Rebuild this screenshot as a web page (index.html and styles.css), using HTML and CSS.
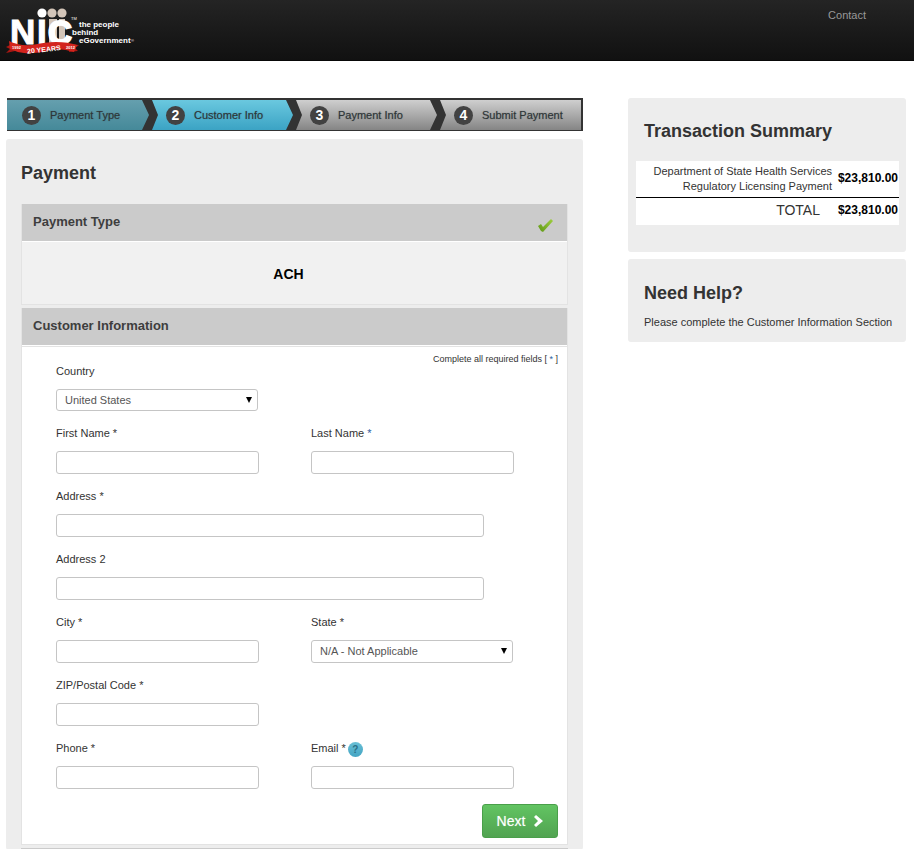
FILE: index.html
```html
<!DOCTYPE html>
<html lang="en">
<head>
<meta charset="utf-8">
<title>Payment</title>
<link rel="stylesheet" href="styles.css">
</head>
<body>
<header class="topbar">
  <svg class="logo" width="136" height="54" viewBox="0 0 136 54" role="img" aria-label="NIC">
    <g fill="#d3c5b8">
      <circle cx="52" cy="13" r="4.600"/><circle cx="62" cy="13" r="4.600"/>
      <rect x="49" y="19" width="8" height="25"/><rect x="59" y="19" width="6" height="25"/>
    </g>
    <circle cx="42" cy="13" r="4.600" fill="#fff"/>
    <g class="logo-name"><text x="10" y="44">N</text><text x="37" y="44">I</text><text class="logo-c" x="48" y="44">C</text></g>
    <path d="M6 47 L14 43 L15 51 L6 53 L10 49Z M79 45 L70 44 L69 52 L78 51 L75 48Z" fill="#a91712"/>
    <path d="M9 41 Q18 46 32 45 Q46 42 56 42 Q68 42 77 45 L74 52 Q62 48 50 50 Q36 54 24 53 Q16 52 10 49Z" fill="#d3241d"/>
    <g class="logo-ribbon"><text x="27" y="52" transform="rotate(-6 43 50)">20 YEARS</text></g>
    <g class="logo-year"><text x="12" y="49">1992</text><text x="66" y="49">2012</text></g>
    <g class="logo-tag"><text x="79" y="27">the people</text><text x="72" y="35">behind</text><text x="79" y="43">eGovernment</text></g>
    <g class="logo-mark"><text x="71" y="20">TM</text><text x="131" y="42">®</text></g>
  </svg>
  <a class="contact" href="#">Contact</a>
</header>

<div class="page">
  <main>
    <ol class="steps">
      <li class="step done"><span class="num">1</span>Payment Type</li>
      <li class="step current"><span class="num">2</span>Customer Info</li>
      <li class="step"><span class="num">3</span>Payment Info</li>
      <li class="step last"><span class="num">4</span>Submit Payment</li>
    </ol>

    <div class="panel payment">
      <h1 class="title">Payment</h1>
      <section class="card">
        <h2 class="card-head">Payment Type
          <svg class="check" width="15" height="13" viewBox="0 0 15 13" aria-hidden="true">
            <defs><linearGradient id="leaf" x1="0" y1="1" x2="1" y2="0"><stop offset="0" stop-color="#5f9717"/><stop offset="1" stop-color="#9fcf3f"/></linearGradient></defs>
            <path d="M0 7 L3 5 L5 8 L13 0 L15 2 L5 13 L3 12Z" fill="url(#leaf)"/>
          </svg>
        </h2>
        <div class="card-body method">ACH</div>
      </section>

      <section class="card">
        <h2 class="card-head">Customer Information</h2>
        <form class="card-body customer">
          <p class="note">Complete all required fields [ <i>*</i> ]</p>
          <div class="fields">
            <div class="field"><label for="country">Country</label>
              <div class="pick"><select id="country" class="short"><option>United States</option></select></div></div>
            <div class="field left"><label for="first">First Name *</label><input id="first" type="text"></div>
            <div class="field"><label for="last">Last Name <i>*</i></label><input id="last" type="text"></div>
            <div class="field wide"><label for="address">Address *</label><input id="address" type="text"></div>
            <div class="field wide"><label for="address2">Address 2</label><input id="address2" type="text"></div>
            <div class="field"><label for="city">City *</label><input id="city" type="text"></div>
            <div class="field"><label for="state">State *</label>
              <div class="pick"><select id="state"><option>N/A - Not Applicable</option></select></div></div>
            <div class="field"><label for="zip">ZIP/Postal Code *</label><input id="zip" type="text"></div>
            <div class="field left"><label for="phone">Phone *</label><input id="phone" type="tel"></div>
            <div class="field"><div class="label-row"><label for="email">Email *</label><button class="help" type="button" aria-label="Help">?</button></div><input id="email" type="email"></div>
          </div>
          <div class="actions">
            <button class="next" type="button">Next
              <svg width="9" height="12" viewBox="0 0 9 12" aria-hidden="true"><path d="M0 2 L2 0 L9 6 L2 12 L0 10 L4 6Z" fill="#fff"/></svg>
            </button>
          </div>
        </form>
      </section>
      <div class="card-edge"></div>
    </div>
  </main>

  <aside>
    <section class="panel summary">
      <h2 class="title">Transaction Summary</h2>
      <table>
        <tbody><tr><th scope="row">Department of State Health Services Regulatory Licensing Payment</th><td>$23,810.00</td></tr></tbody>
        <tfoot><tr><th scope="row">TOTAL</th><td>$23,810.00</td></tr></tfoot>
      </table>
    </section>
    <section class="panel need-help">
      <h2 class="title">Need Help?</h2>
      <p>Please complete the Customer Information Section</p>
    </section>
  </aside>
</div>
</body>
</html>
```
FILE: styles.css
```css
* { box-sizing: border-box; }
body {
  margin: 0;
  background: #fff;
  color: #333;
  font: 11px/15px "Liberation Sans", Arial, sans-serif;
}
h1, h2, p, ol { margin: 0; padding: 0; }
i { font-style: normal; color: #2b5c9e; }

.topbar {
  display: flex;
  justify-content: space-between;
  align-items: flex-start;
  height: 61px;
  padding-right: 48px;
  background: linear-gradient(#242424, #111);
  border-bottom: 1px solid #080808;
}
.logo { display: block; }
.logo text { font-weight: bold; fill: #fff; }
.logo-name text { font-size: 35px; stroke: #fff; stroke-width: 1px; }
.logo-name .logo-c { font-size: 33px; stroke-width: 2px; }
.logo-tag text { font-size: 8px; }
.logo-ribbon text { font-size: 7px; }
.logo-year text { font-size: 4px; }
.logo-mark text { font-size: 4px; font-weight: normal; }
.contact {
  padding-top: 8px;
  color: #999;
  text-decoration: none;
}

.page {
  display: grid;
  grid-template-columns: 1fr 278px;
  gap: 45px;
  padding: 37px 8px 0 6px;
}

.steps {
  display: grid;
  grid-template-columns: repeat(4, 1fr);
  margin: 0 0 8px 1px;
  padding: 2px 0 1px;
  background: #333;
  list-style: none;
}
.step {
  display: flex;
  align-items: center;
  gap: 9px;
  height: 30px;
  padding-left: 15px;
  background: linear-gradient(#cfcfcf, #858585);
  color: #2e3638;
  text-shadow: 0 0 1px rgba(40, 48, 50, .5);
  clip-path: polygon(1px 0, calc(100% - 9px) 0, calc(100% - 2px) 50%, calc(100% - 9px) 100%, 1px 100%, 7px 50%);
}
.step.done {
  background: linear-gradient(#659fae, #458999);
  clip-path: polygon(0 0, calc(100% - 9px) 0, calc(100% - 2px) 50%, calc(100% - 9px) 100%, 0 100%);
}
.step.current { background: linear-gradient(#6ac8df, #3ba3c4); }
.step.last { clip-path: polygon(1px 0, calc(100% - 2px) 0, calc(100% - 2px) 100%, 1px 100%, 7px 50%); }
.num {
  width: 19px;
  height: 19px;
  border-radius: 50%;
  background: #424242;
  color: #fff;
  font: bold 14px/19px "Liberation Sans", Arial, sans-serif;
  text-align: center;
}

.panel { background: #ededed; border-radius: 3px; }
.title {
  font-size: 18px;
  line-height: 24px;
}
.payment { padding: 22px 15px 0; }
.payment .title { margin-bottom: 19px; }
.card {
  margin-bottom: 3px;
  border: 1px solid #e3e3e3;
  border-top: 0;
}
.card-head {
  display: flex;
  justify-content: space-between;
  align-items: center;
  height: 37px;
  padding: 0 14px 2px 11px;
  background: #cbcbcb;
  color: #3e3e3e;
  font-size: 13px;
}
.check { margin-top: 8px; }
.card-body { border-top: 1px solid #fff; }
.method {
  padding: 25px 12px 22px 0;
  background: #f1f1f1;
  color: #000;
  font-size: 14px;
  font-weight: bold;
  text-align: center;
}
.customer {
  padding: 8px 9px 6px;
  background: #fff;
  box-shadow: inset 0 1px #e3e3e3;
}
.note {
  font-size: 9px;
  line-height: 10px;
  text-align: right;
}
.fields {
  display: grid;
  grid-template-columns: 203px 203px;
  column-gap: 52px;
  row-gap: 15px;
  padding-left: 25px;
}
.left { grid-column-start: 1; }
.wide { grid-column: 1 / -1; }
.field label { display: block; }
.field input, .pick {
  display: block;
  width: 203px;
  height: 23px;
  margin-top: 10px;
}
.field input, .pick select {
  border: 1px solid #c5c5c5;
  border-radius: 3px;
  background: #fff;
  font: inherit;
  color: #555;
}
.field.wide input { width: 428px; }
.pick { position: relative; height: auto; }
.pick select {
  display: block;
  appearance: none;
  width: 202px;
  height: 23px;
  padding: 0 8px;
}
.pick select.short { height: 22px; }
.pick::after {
  content: "";
  position: absolute;
  top: 8px;
  right: 7px;
  border: solid transparent;
  border-width: 6px 3px 0;
  border-top-color: #000;
  pointer-events: none;
}
.label-row { display: flex; gap: 2px; height: 15px; }
.help {
  width: 15px;
  height: 15px;
  margin-top: 1px;
  padding: 0;
  border: 0;
  border-radius: 50%;
  background: linear-gradient(#68bfd5, #43a4c3);
  color: #2a6f86;
  font: bold 10px/15px "Liberation Sans", Arial, sans-serif;
}
.actions {
  display: flex;
  justify-content: flex-end;
  margin-top: 15px;
}
.next {
  display: flex;
  align-items: center;
  justify-content: center;
  gap: 9px;
  width: 76px;
  height: 34px;
  padding: 0;
  border: 1px solid #4a9f4a;
  border-radius: 3px;
  background: linear-gradient(#62c462, #51a351);
  color: #fff;
  font: 14px/20px "Liberation Sans", Arial, sans-serif;
  text-shadow: 0 0 1px rgba(255, 255, 255, .5);
}
.card-edge { height: 2px; background: #cbcbcb; }

.summary {
  margin-bottom: 7px;
  padding: 21px 7px 27px 8px;
}
.summary .title { margin: 0 0 18px 8px; }
.summary table {
  width: 100%;
  border-collapse: collapse;
  background: #fff;
}
.summary th {
  padding: 3px 0 3px 16px;
  font-weight: normal;
  text-align: right;
}
.summary td {
  width: 67px;
  padding: 0 1px 2px 0;
  color: #000;
  font-size: 12px;
  font-weight: bold;
  text-align: right;
}
.summary tfoot { border-top: 1px solid #000; }
.summary tfoot th { padding: 5px 12px 7px 0; font-size: 14px; }
.need-help { padding: 22px 8px 12px 16px; }
.need-help .title { margin-bottom: 10px; }
```
